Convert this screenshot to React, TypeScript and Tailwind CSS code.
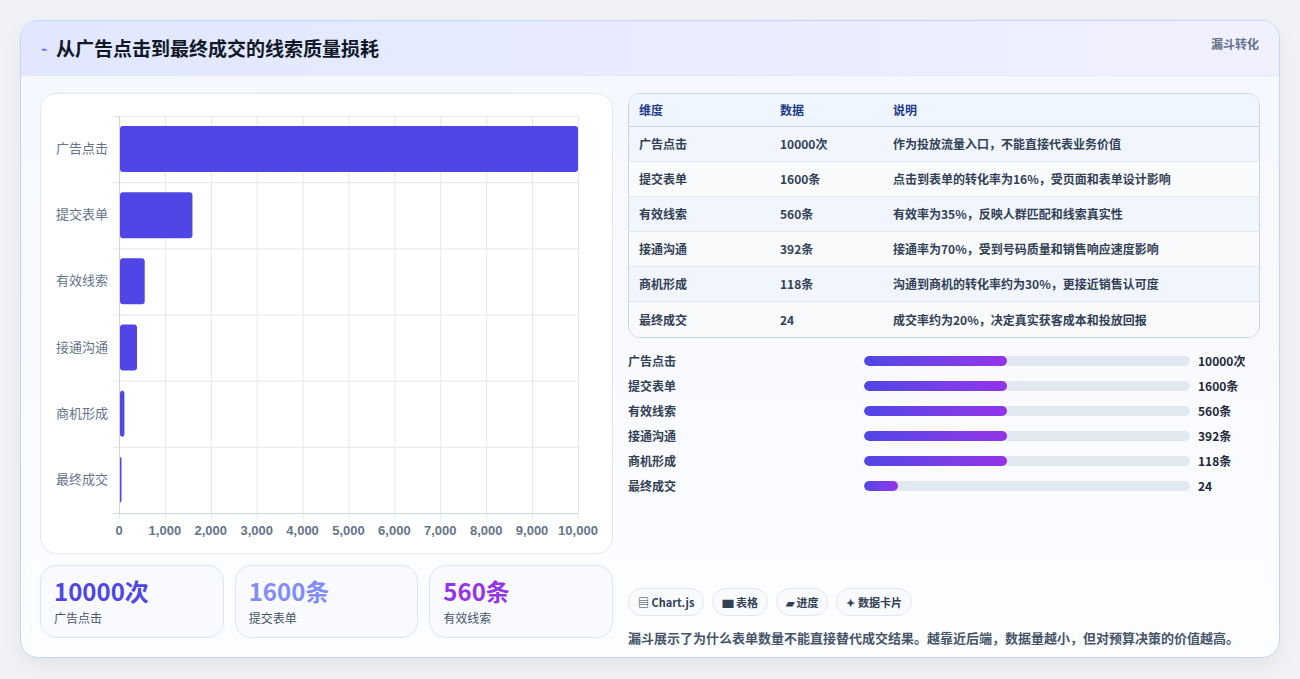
import React from "react";

const rows = [
  { n: "广告点击", v: 10000, d: "10000次", e: "作为投放流量入口，不能直接代表业务价值" },
  { n: "提交表单", v: 1600, d: "1600条", e: "点击到表单的转化率为16%，受页面和表单设计影响" },
  { n: "有效线索", v: 560, d: "560条", e: "有效率为35%，反映人群匹配和线索真实性" },
  { n: "接通沟通", v: 392, d: "392条", e: "接通率为70%，受到号码质量和销售响应速度影响" },
  { n: "商机形成", v: 118, d: "118条", e: "沟通到商机的转化率约为30%，更接近销售认可度" },
  { n: "最终成交", v: 24, d: "24", e: "成交率约为20%，决定真实获客成本和投放回报" },
];
const prog = [44, 44, 44, 44, 44, 10.5];
const ticks = ["0", "1,000", "2,000", "3,000", "4,000", "5,000", "6,000", "7,000", "8,000", "9,000", "10,000"];
const font = { fontFamily: '"Noto Sans CJK SC", "Noto Sans", sans-serif' };

function Chart() {
  const W = 459, H = 397;
  return (
    <div className="relative h-[461px] rounded-2xl border border-[#e2e8f0] bg-white">
      <div className="absolute left-[78px] top-[22px]" style={{ width: W, height: H }}>
        <svg width={W + 1} height={H + 1} className="absolute left-0 top-0 overflow-visible">
          {ticks.map((_, i) => (
            <line key={i} x1={i * W / 10 + 0.5} x2={i * W / 10 + 0.5} y1={0} y2={H + 6} stroke="#e5e7eb" />
          ))}
          {rows.map((_, i) => (
            <line key={i} x1={-6} x2={W} y1={i * H / 6 + 0.5} y2={i * H / 6 + 0.5} stroke="#e5e7eb" />
          ))}
          <line x1={-6} x2={W} y1={H + 0.5} y2={H + 0.5} stroke="#cbd5e1" />
          <line x1={0.5} x2={0.5} y1={0} y2={H} stroke="#cbd5e1" />
          {rows.map((r, i) => (
            <rect key={i} x={1} y={i * H / 6 + 10} width={Math.max(1.5, r.v / 10000 * W - 1)} height={46} rx={3} fill="#4f46e5" />
          ))}
        </svg>
        {rows.map((r, i) => (
          <div key={i} className="absolute right-[470px] text-[13px] text-[#64748b] whitespace-nowrap" style={{ top: i * H / 6 + 22 }}>{r.n}</div>
        ))}
        {ticks.map((t, i) => (
          <div key={i} className="absolute text-[13px] font-semibold text-[#64748b] -translate-x-1/2 whitespace-nowrap" style={{ left: i * W / 10, top: H + 8, fontFamily: '"Liberation Sans", Arial, sans-serif' }}>{t}</div>
        ))}
      </div>
    </div>
  );
}

export default function App() {
  return (
    <div className="min-h-[679px] bg-[#f1f2f5] pt-[20px] px-[20px]" style={font}>
      <div className="h-[638px] rounded-[18px] border border-[#c7d2fe] bg-gradient-to-b from-[#f5f7ff] to-[#fcfdff] shadow-[0_8px_20px_rgba(0,0,0,0.06)] overflow-hidden">
        <div className="h-[55px] flex items-center justify-between px-[20px] bg-gradient-to-r from-[#e0e7ff] to-[#f1f0fe] border-b border-[#e5e9fb]">
          <div className="flex items-center gap-[8px]">
            <span className="text-[#4f46e5] text-[11px]">⌁</span>
            <span className="text-[19px] font-bold text-[#111827]">从广告点击到最终成交的线索质量损耗</span>
          </div>
          <span className="text-[12px] font-semibold text-[#64748b] -mt-[8px]">漏斗转化</span>
        </div>
        <div className="flex gap-[15px] px-[19px] pt-[17px]">
          <div className="w-[573px] flex flex-col gap-[11px]">
            <Chart />
            <div className="grid grid-cols-3 gap-[11px]">
              {[["10000次", "text-[#4f46e5]", "广告点击"], ["1600条", "text-[#818cf8]", "提交表单"], ["560条", "text-[#9333ea]", "有效线索"]].map(([v, c, l]) => (
                <div key={l} className="h-[73px] rounded-2xl border border-[#dbe4fb] bg-[#f8faff] px-[13px] pt-[9px]">
                  <div className={`text-[24px] leading-[32px] font-bold ${c}`}>{v}</div>
                  <div className="text-[12px] text-[#475569] mt-[2px]">{l}</div>
                </div>
              ))}
            </div>
          </div>
          <div className="flex-1 flex flex-col">
            <div className="rounded-xl border border-[#cbd5e1] overflow-hidden text-[12px] font-semibold text-[#334155]">
              <div className="flex h-[33px] items-center bg-[#eff6ff] text-[#1e3a8a] border-b border-[#cbd5e1]">
                <div className="w-[151px] pl-[10px]">维度</div>
                <div className="w-[113px]">数据</div>
                <div>说明</div>
              </div>
              {rows.map((r, i) => (
                <div key={i} className={`flex h-[35px] items-center ${i % 2 ? "bg-[#f8fafc]" : "bg-[#f1f5fe]"} ${i < 5 ? "border-b border-[#e2e8f0]" : ""}`}>
                  <div className="w-[151px] pl-[10px]">{r.n}</div>
                  <div className="w-[113px]">{r.d}</div>
                  <div>{r.e}</div>
                </div>
              ))}
            </div>
            <div className="mt-[10px] flex flex-col text-[12px] font-semibold text-[#334155]">
              {rows.map((r, i) => (
                <div key={i} className="flex h-[25px] items-center">
                  <div className="w-[236px]">{r.n}</div>
                  <div className="w-[326px] h-[10px] rounded-full bg-[#e2e8f0] overflow-hidden">
                    <div className="h-full rounded-full bg-gradient-to-r from-[#4f46e5] to-[#9333ea]" style={{ width: `${prog[i]}%` }} />
                  </div>
                  <div className="ml-[8px] text-[#1f2937]">{r.d}</div>
                </div>
              ))}
            </div>
            <div className="mt-[90px] flex gap-[8px] text-[11px] font-semibold text-[#334155]">
              {["▤ Chart.js", "▆ 表格", "▰ 进度", "✦ 数据卡片"].map((t) => (
                <div key={t} className="h-[28px] px-[9px] flex items-center rounded-full border border-[#e2e8f0] bg-[#f8fafc]">{t}</div>
              ))}
            </div>
            <div className="mt-[12px] text-[13px] font-semibold text-[#475569]">漏斗展示了为什么表单数量不能直接替代成交结果。越靠近后端，数据量越小，但对预算决策的价值越高。</div>
          </div>
        </div>
      </div>
    </div>
  );
}
